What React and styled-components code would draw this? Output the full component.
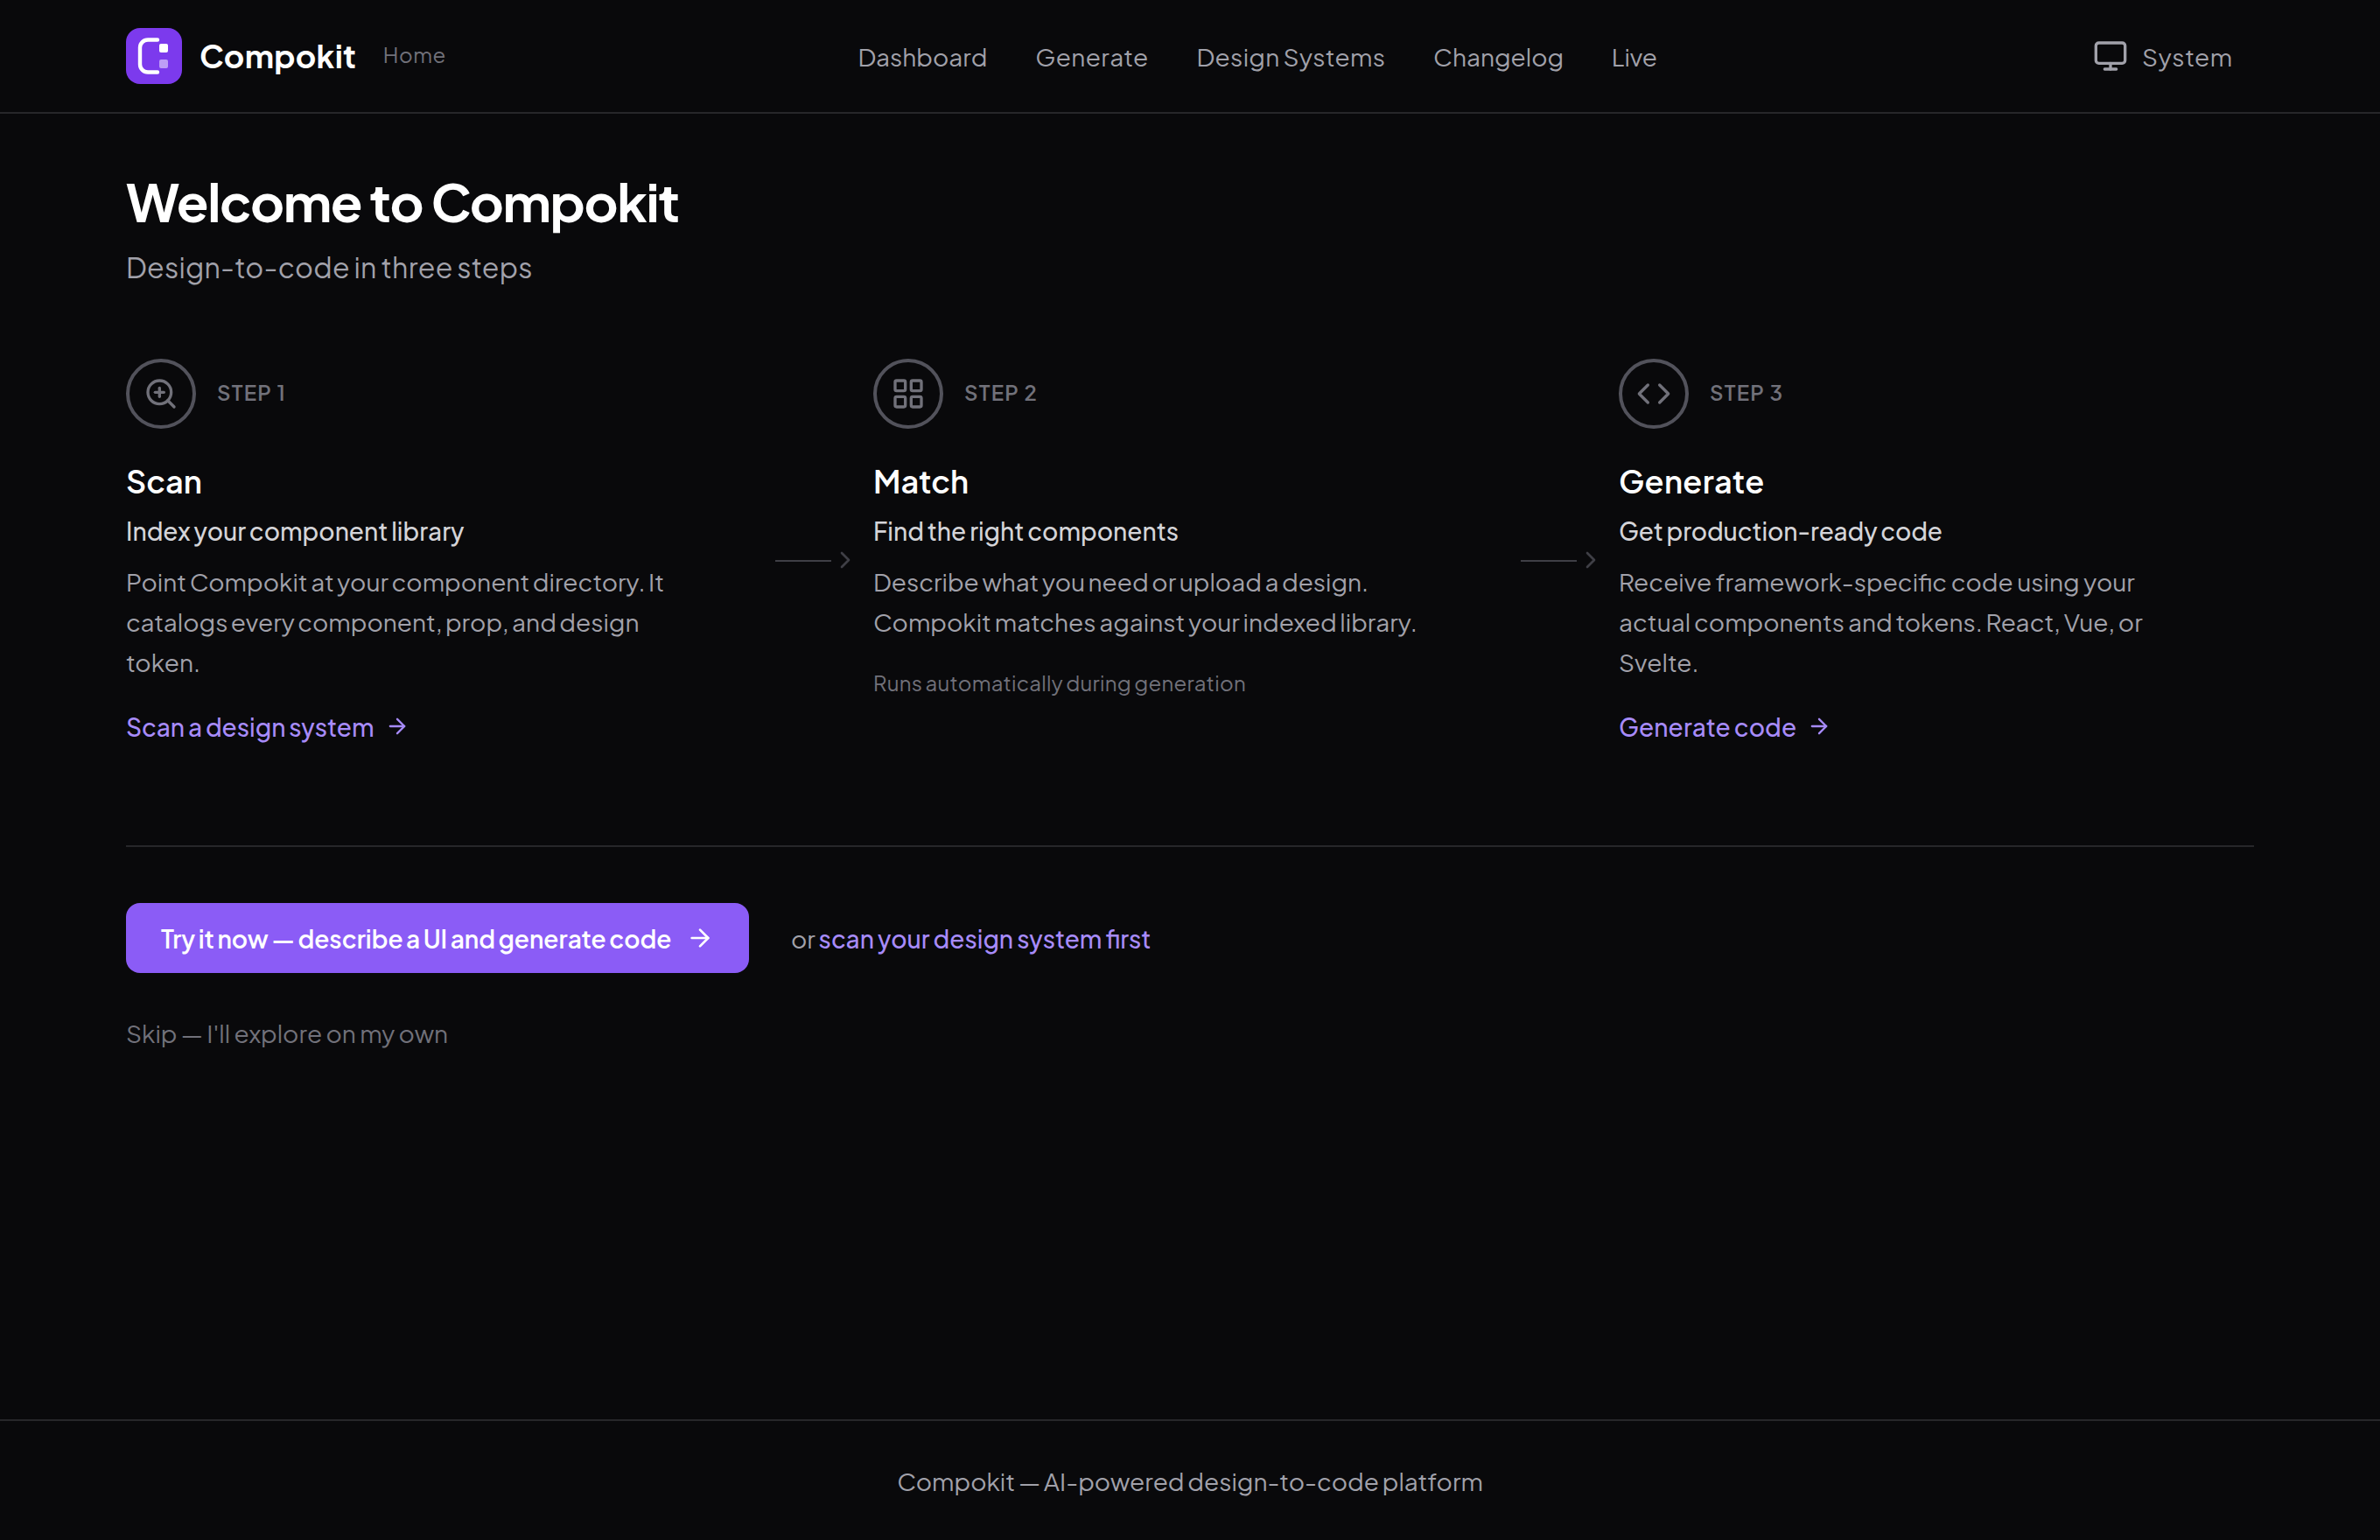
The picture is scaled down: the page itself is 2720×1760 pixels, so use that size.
import React from 'react';
import styled, { createGlobalStyle } from 'styled-components';
import {
  ArrowRight,
  ChevronRight,
  Code,
  LayoutGrid,
  Monitor,
  ZoomIn,
} from 'lucide-react';

const GlobalStyle = createGlobalStyle`
  * {
    box-sizing: border-box;
  }

  body {
    margin: 0;
    background: #09090b;
    color: #fff;
    font-family: "Plus Jakarta Sans", Inter, sans-serif;
    font-size: 28px;
    line-height: 43px;
    word-spacing: -1px;
  }

  h1, h2, h3, p {
    margin: 0;
  }

  svg {
    display: block;
    flex-shrink: 0;
  }
`;

const Page = styled.div`
  display: flex;
  flex-direction: column;
  height: 1760px;
  overflow: hidden;
`;

const Header = styled.header`
  display: flex;
  align-items: center;
  justify-content: space-between;
  height: 130px;
  padding: 0 144px;
  border-bottom: 2px solid #27272a;
`;

const Brand = styled.div`
  display: flex;
  align-items: center;
  width: 366px;
`;

const BrandName = styled.span`
  padding-bottom: 1px;
  margin-left: 20px;
  font-size: 36px;
  font-weight: 700;
  letter-spacing: 0.33px;
  line-height: 45px;
`;

const BrandPage = styled.span`
  padding-bottom: 4px;
  margin-left: 30.5px;
  color: #71717a;
  font-size: 24px;
  letter-spacing: 0.5px;
  line-height: 30px;
`;

const Nav = styled.nav`
  display: flex;
  gap: 54.8px;
  width: 917px;
  padding-top: 1px;
`;

const NavLink = styled.a`
  color: #a1a1aa;
  letter-spacing: ${({ $track }) => $track}px;
  white-space: nowrap;
`;

const ThemeButton = styled.div`
  display: flex;
  align-items: center;
  gap: 16px;
  width: 208px;
  padding-left: 24px;
  color: #a1a1aa;

  span {
    padding-top: 1px;
    letter-spacing: 0.6px;
  }
`;

const Main = styled.main`
  flex: 1;
  padding: 64px 144px 0;
`;

const Title = styled.h1`
  font-size: 60px;
  font-weight: 700;
  letter-spacing: -1.4px;
  line-height: 72px;
  word-spacing: 0;
`;

const Subtitle = styled.p`
  margin-top: 16px;
  color: #a1a1aa;
  font-size: 32px;
  letter-spacing: 0.25px;
  line-height: 46px;
`;

const Steps = styled.section`
  display: grid;
  grid-template-columns: 726px 128px 724px 128px 726px;
  height: 460px;
  margin-top: 82px;
`;

const Step = styled.div`
  display: flex;
  flex-direction: column;
  align-items: flex-start;
  white-space: nowrap;
`;

const StepHead = styled.div`
  display: flex;
  align-items: center;
  gap: 24px;
`;

const StepCircle = styled.div`
  display: flex;
  align-items: center;
  justify-content: center;
  width: 80px;
  height: 80px;
  border: 4px solid #52525b;
  border-radius: 50%;
  color: #71717a;
`;

const StepLabel = styled.span`
  padding-bottom: 4px;
  color: #71717a;
  font-size: 24px;
  font-weight: 600;
  letter-spacing: 0.05em;
  line-height: 30px;
  word-spacing: 0;
`;

const StepTitle = styled.h2`
  margin-top: 35px;
  font-size: 36px;
  font-weight: 600;
  letter-spacing: ${({ $track }) => $track}px;
  line-height: 49px;
`;

const StepLead = styled.h3`
  margin-top: 12px;
  color: #d4d4d8;
  font-size: 28px;
  font-weight: 500;
  letter-spacing: ${({ $track }) => $track}px;
  line-height: 41px;
`;

const StepText = styled.p`
  margin-top: 14.5px;
  color: #a1a1aa;
  line-height: 46px;
`;

const Line = styled.span`
  display: block;
  word-spacing: ${({ $words }) => $words}px;
`;

const StepNote = styled.p`
  margin-top: 28.5px;
  color: #71717a;
  font-size: 24px;
  letter-spacing: 0.27px;
  line-height: 36px;
`;

const StepLink = styled.a`
  display: flex;
  align-items: center;
  gap: 12px;
  margin-top: 30.5px;
  color: #a78bfa;
  font-weight: 500;
  letter-spacing: ${({ $track }) => $track}px;
  line-height: 41px;

  svg {
    margin-bottom: 1px;
  }
`;

const Connector = styled.div`
  display: flex;
  align-items: center;
  padding: 0 16px;
  color: #3f3f46;
`;

const ConnectorLine = styled.div`
  width: 64px;
  height: 2px;
  margin-top: 2px;
  background: #3f3f46;
`;

const Actions = styled.section`
  margin-top: 96px;
  padding-top: 64px;
  border-top: 2px solid #27272a;
`;

const ActionRow = styled.div`
  display: flex;
  align-items: center;
  gap: 48px;
`;

const PrimaryButton = styled.a`
  display: flex;
  align-items: center;
  justify-content: space-between;
  width: 712px;
  height: 80px;
  padding: 0 40px;
  border-radius: 16px;
  background: #8b5cf6;
  color: #fff;
  font-weight: 600;
  white-space: nowrap;
  word-spacing: -1.45px;

  span {
    padding-top: 1px;
  }
`;

const AltAction = styled.p`
  padding-top: 1px;
  color: #a1a1aa;
  word-spacing: -1px;

  a {
    color: #a78bfa;
    font-weight: 500;
    word-spacing: -0.8px;
  }
`;

const Skip = styled.p`
  margin-top: 47px;
  color: #71717a;
  word-spacing: -0.45px;
`;

const Footer = styled.footer`
  display: flex;
  align-items: center;
  justify-content: center;
  height: 138px;
  padding-top: 1px;
  border-top: 2px solid #27272a;
  color: #a1a1aa;
`;

const Logo = () => (
  <svg width="64" height="64" viewBox="0 0 64 64" fill="none">
    <rect width="64" height="64" rx="16" fill="#7c3aed" />
    <path
      d="M36 13.5H25a9 9 0 0 0-9 9v19a9 9 0 0 0 9 9h11"
      stroke="#fff"
      strokeWidth="4.4"
      strokeLinecap="round"
    />
    <rect x="38" y="18" width="10" height="10" rx="2" fill="#fff" />
    <rect x="38" y="36" width="10" height="10" rx="2" fill="#fff" opacity="0.5" />
  </svg>
);

const navLinks = [
  { label: 'Dashboard', track: 0 },
  { label: 'Generate', track: 0.4 },
  { label: 'Design Systems', track: 0.3 },
  { label: 'Changelog', track: 0 },
  { label: 'Live', track: -0.2 },
];

const steps = [
  {
    icon: ZoomIn,
    title: 'Scan',
    lead: 'Index your component library',
    text: [
      ['Point Compokit at your component directory. It', -1.2],
      ['catalogs every component, prop, and design', -1.3],
      ['token.', 0],
    ],
    link: 'Scan a design system',
  },
  {
    icon: LayoutGrid,
    title: 'Match',
    lead: 'Find the right components',
    text: [
      ['Describe what you need or upload a design.', -1.2],
      ['Compokit matches against your indexed library.', -1],
    ],
    note: 'Runs automatically during generation',
  },
  {
    icon: Code,
    title: 'Generate',
    titleTrack: 0.3,
    lead: 'Get production-ready code',
    leadTrack: -0.12,
    text: [
      ['Receive framework-specific code using your', -0.2],
      ['actual components and tokens. React, Vue, or', -0.9],
      ['Svelte.', 0],
    ],
    link: 'Generate code',
    linkTrack: 0.1,
  },
];

export default function App() {
  return (
    <>
      <GlobalStyle />
      <Page>
        <Header>
          <Brand>
            <Logo />
            <BrandName>Compokit</BrandName>
            <BrandPage>Home</BrandPage>
          </Brand>
          <Nav>
            {navLinks.map(({ label, track }) => (
              <NavLink key={label} $track={track}>{label}</NavLink>
            ))}
          </Nav>
          <ThemeButton>
            <Monitor size={40} />
            <span>System</span>
          </ThemeButton>
        </Header>

        <Main>
          <Title>Welcome to Compokit</Title>
          <Subtitle>Design-to-code in three steps</Subtitle>

          <Steps>
            {steps.map(({ icon: Icon, ...step }, i) => (
              <React.Fragment key={step.title}>
                {i > 0 && (
                  <Connector>
                    <ConnectorLine />
                    <ChevronRight size={32} />
                  </Connector>
                )}
                <Step>
                  <StepHead>
                    <StepCircle>
                      <Icon size={40} />
                    </StepCircle>
                    <StepLabel>{`STEP ${i + 1}`}</StepLabel>
                  </StepHead>
                  <StepTitle $track={step.titleTrack || 0}>{step.title}</StepTitle>
                  <StepLead $track={step.leadTrack || 0}>{step.lead}</StepLead>
                  <StepText>
                    {step.text.map(([line, words]) => (
                      <Line key={line} $words={words}>{line}</Line>
                    ))}
                  </StepText>
                  {step.note && <StepNote>{step.note}</StepNote>}
                  {step.link && (
                    <StepLink $track={step.linkTrack || 0}>
                      {step.link}
                      <ArrowRight size={28} />
                    </StepLink>
                  )}
                </Step>
              </React.Fragment>
            ))}
          </Steps>

          <Actions>
            <ActionRow>
              <PrimaryButton>
                <span>Try it now — describe a UI and generate code</span>
                <ArrowRight size={32} />
              </PrimaryButton>
              <AltAction>
                or <a>scan your design system first</a>
              </AltAction>
            </ActionRow>
            <Skip>Skip — I&apos;ll explore on my own</Skip>
          </Actions>
        </Main>

        <Footer>Compokit — AI-powered design-to-code platform</Footer>
      </Page>
    </>
  );
}
